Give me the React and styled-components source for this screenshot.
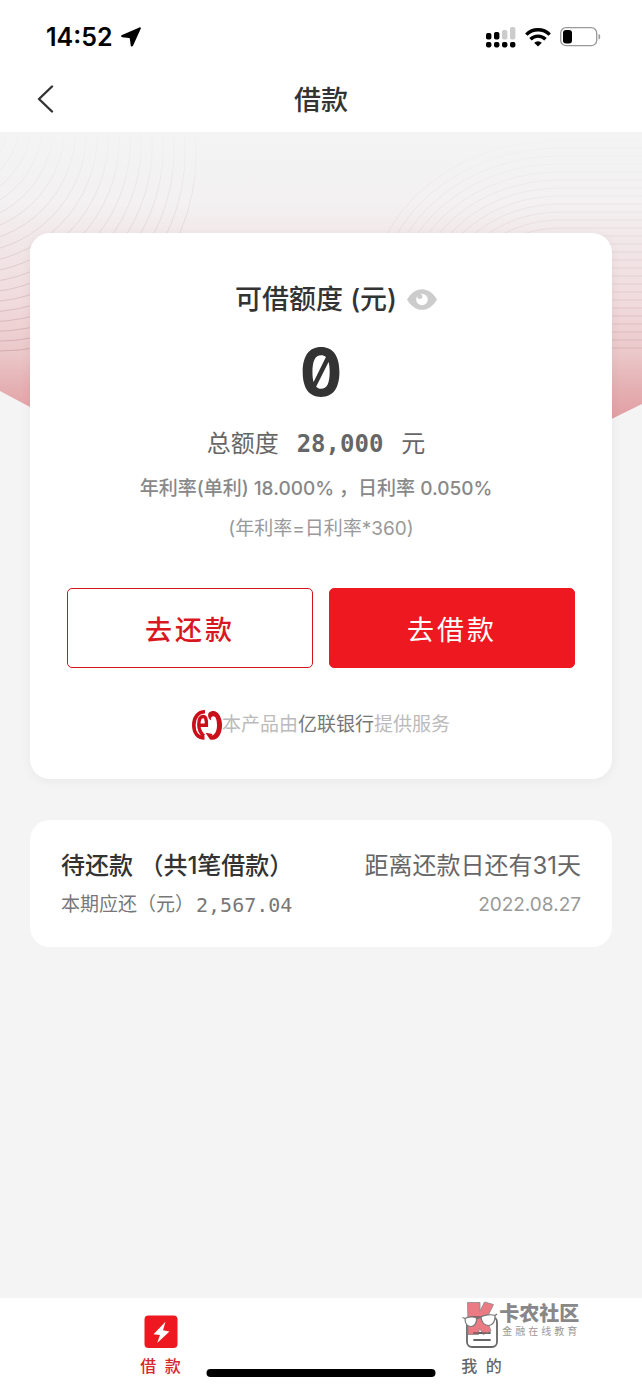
import React, { useState } from 'react';
import styled, { createGlobalStyle, css } from 'styled-components';

const GlobalStyle = createGlobalStyle`
  * {
    box-sizing: border-box;
  }

  body {
    margin: 0;
    background: #f4f4f4;
    color: #333;
    font-family: Inter, 'Noto Sans CJK SC', sans-serif;
  }

  button {
    font-family: inherit;
    cursor: pointer;
  }
`;

const Page = styled.div`
  min-height: 100vh;
  display: flex;
  flex-direction: column;
`;

const StatusBar = styled.div`
  height: 74px;
  padding: 0 41px 0 46px;
  display: flex;
  align-items: center;
  justify-content: space-between;
  background: #fff;
  color: #000;
`;

const StatusGroup = styled.div`
  display: flex;
  align-items: center;
  gap: ${(props) => props.$gap}px;
`;

const Time = styled.span`
  font-size: 25px;
  line-height: 30px;
  font-weight: 600;
`;

const Header = styled.header`
  height: 58px;
  padding: 0 32px 6px;
  display: grid;
  grid-template-columns: 30px 1fr 30px;
  align-items: center;
  background: #fff;
`;

const HeaderTitle = styled.h1`
  margin: 0;
  padding-top: 2px;
  text-align: center;
  font-size: 27px;
  line-height: 40px;
  font-weight: 500;
`;

const IconButton = styled.button`
  padding: 0 0 2px;
  border: 0;
  background: none;
  display: flex;
  align-items: center;
`;

const Main = styled.main`
  position: relative;
  flex: 1;
  padding: 101px 30px 40px;
  display: flex;
  flex-direction: column;
  gap: 41px;
`;

const Backdrop = styled.svg`
  position: absolute;
  top: 0;
  left: 0;
  width: 100%;
  height: 440px;
`;

const Card = styled.section`
  position: relative;
  border-radius: 20px;
  background: #fff;
`;

const LimitCard = styled(Card)`
  padding: 47px 37px 39px;
  display: flex;
  flex-direction: column;
  align-items: center;
  box-shadow: 0 2px 12px rgba(0, 0, 0, 0.05);
`;

const LimitTitle = styled.div`
  padding-left: 30px;
  display: flex;
  align-items: center;
  gap: 10px;
`;

const LimitLabel = styled.h2`
  margin: 0;
  font-size: 27px;
  line-height: 40px;
  font-weight: 500;
`;

const Amount = styled.div`
  margin-top: 12px;
  font-size: 66px;
  line-height: 80px;
  font-weight: 700;
  font-feature-settings: 'zero', 'tnum';
`;

const Total = styled.div`
  margin-top: 16px;
  padding-right: 10px;
  display: flex;
  align-items: center;
  gap: 18px;
  font-size: 24px;
  line-height: 32px;
  color: #666;
`;

const Mono = styled.span`
  font-family: 'DejaVu Sans Mono', monospace;
  font-weight: ${(props) => (props.$bold ? 700 : 400)};
`;

const Rate = styled.p`
  margin: 15px 0 0;
  padding-right: 10px;
  font-size: 19px;
  line-height: 28px;
  font-weight: 500;
  color: #888;
`;

const Formula = styled.p`
  margin: 12px 0 0;
  font-size: 19px;
  line-height: 28px;
  color: #999;
`;

const Actions = styled.div`
  align-self: stretch;
  margin-top: 45px;
  display: grid;
  grid-template-columns: 1fr 1fr;
  gap: 16px;
`;

const ActionButton = styled.button`
  height: 80px;
  border: 1px solid #d2141c;
  border-radius: 5px;
  background: #fff;
  color: #d9171f;
  font-size: 27px;
  font-weight: 500;
  letter-spacing: 3px;

  ${(props) =>
    props.$primary &&
    css`
      border-color: #ed1820;
      background: #ed1820;
      color: #fff;
      font-weight: 400;
    `}
`;

const Provider = styled.p`
  margin: 42px 0 0;
  display: flex;
  align-items: center;
  font-size: 19px;
  line-height: 30px;
  color: #bbb;
`;

const Bank = styled.span`
  color: #777;
`;

const BillCard = styled(Card)`
  padding: 29px 31px 28px;
  display: flex;
  flex-direction: column;
  gap: 8px;
`;

const BillRow = styled.div`
  display: flex;
  align-items: center;
  justify-content: space-between;
`;

const BillTitle = styled.h2`
  margin: 0;
  font-size: 24px;
  line-height: 34px;
  font-weight: 500;
`;

const DueIn = styled.span`
  font-size: 24px;
  line-height: 34px;
  color: #666;
`;

const BillAmount = styled.span`
  display: flex;
  align-items: center;
  gap: 2px;
  font-size: 19px;
  line-height: 28px;
  color: #777;

  ${Mono} {
    font-size: 20px;
  }
`;

const DueDate = styled.time`
  font-size: 19px;
  line-height: 28px;
  color: #999;
`;

const TabBar = styled.nav`
  position: relative;
  height: 91px;
  display: grid;
  grid-template-columns: 1fr 1fr;
  background: #fff;
`;

const Tab = styled.a`
  padding-top: 17px;
  display: flex;
  flex-direction: column;
  align-items: center;
  gap: 5px;
  color: ${(props) => (props.$active ? '#d9272e' : '#666')};
  font-size: 16px;
  line-height: 24px;
  font-weight: 500;
  text-decoration: none;
`;

const HomeIndicator = styled.div`
  position: absolute;
  left: 50%;
  bottom: 12px;
  width: 229px;
  height: 8px;
  border-radius: 4px;
  background: #000;
  transform: translateX(-50%);
`;

const Watermark = styled.div`
  position: absolute;
  top: 3px;
  left: 72%;
  display: flex;
  align-items: flex-start;
`;

const WatermarkText = styled.div`
  padding-top: 2px;
`;

const WatermarkName = styled.div`
  font-size: 20px;
  line-height: 22px;
  font-weight: 900;
  color: #888;
`;

const WatermarkSlogan = styled.div`
  padding-left: 3px;
  font-size: 10px;
  line-height: 12px;
  letter-spacing: 3px;
  color: #999;
`;

const leftWaves = Array.from({ length: 24 }, (_, i) => {
  const t = i / 17;
  return { cx: -60 * t, cy: 23 - 40 * t, r: 196 - 126 * t };
}).filter((wave) => wave.r > 0);

const rightWaves = Array.from({ length: 27 }, (_, i) => {
  const top = 8 + i * 8;
  const ry = 168 - top;
  const rx = 190 - i * 9;
  return ry > 0 && rx > 0
    ? `M642 ${top}H560A${rx} ${ry} 0 0 0 ${560 - rx} 168`
    : `M642 ${top}H560`;
});

function HeroBackdrop() {
  return (
    <Backdrop viewBox="0 0 642 440" preserveAspectRatio="none" aria-hidden="true">
      <defs>
        <linearGradient id="sky" gradientUnits="userSpaceOnUse" x1="0" y1="0" x2="0" y2="290">
          <stop offset="0" stopColor="#f4f4f4" />
          <stop offset="0.24" stopColor="#f3f1f2" />
          <stop offset="0.36" stopColor="#f2e8e9" />
          <stop offset="0.6" stopColor="#f0dadc" />
          <stop offset="0.76" stopColor="#ebc8ca" />
          <stop offset="0.87" stopColor="#e5b2b5" />
          <stop offset="1" stopColor="#e19da1" />
        </linearGradient>
        <linearGradient id="wave" gradientUnits="userSpaceOnUse" x1="0" y1="0" x2="0" y2="220">
          <stop offset="0" stopColor="#a08a8e" stopOpacity="0.02" />
          <stop offset="0.3" stopColor="#a08a8e" stopOpacity="0.13" />
          <stop offset="1" stopColor="#a8707a" stopOpacity="0.35" />
        </linearGradient>
      </defs>
      <path d="M0 0H642V272L321 430L0 259Z" fill="url(#sky)" />
      <g fill="none" stroke="url(#wave)">
        {leftWaves.map((wave) => (
          <circle key={wave.r} cx={wave.cx} cy={wave.cy} r={wave.r} />
        ))}
      </g>
      <g fill="none" stroke="url(#wave)" strokeOpacity="0.7">
        {rightWaves.map((d) => (
          <path key={d} d={d} />
        ))}
      </g>
    </Backdrop>
  );
}

function LocationIcon() {
  return (
    <svg width="20" height="20" viewBox="0 0 20 20" aria-hidden="true">
      <path
        d="M18.4 .5C19.5 0 20.2 .8 19.7 1.8L12 18.7C11.4 19.9 9.9 19.7 9.7 18.4L8.9 12C8.8 11.4 8.5 11.2 8 11.1L1.3 10.3C-.1 10.1 -.3 8.5 1 7.9Z"
        fill="#000"
      />
    </svg>
  );
}

function SignalIcon() {
  return (
    <svg width="30" height="21" viewBox="0 0 30 21" aria-hidden="true">
      <g fill="#000">
        <rect x="0" y="6" width="5.4" height="6.6" rx="1.8" />
        <rect x="8" y="5" width="5.4" height="7.6" rx="1.8" />
        <rect x="0" y="15" width="5.4" height="5.4" rx="1.8" />
        <rect x="8" y="15" width="5.4" height="5.4" rx="1.8" />
        <rect x="16" y="15" width="5.4" height="5.4" rx="1.8" />
        <rect x="24" y="15" width="5.4" height="5.4" rx="1.8" />
      </g>
      <rect x="16" y="3" width="5.4" height="9.6" rx="1.8" fill="#ccc" />
      <rect x="24" y="0" width="5.4" height="12.6" rx="1.8" fill="#ccc" />
    </svg>
  );
}

function WifiIcon() {
  return (
    <svg width="26" height="19" viewBox="0 0 26 19" aria-hidden="true">
      <g fill="none" stroke="#000" strokeWidth="3.4">
        <path d="M1.3 6.6A16.5 16.5 0 0 1 24.7 6.6" />
        <path d="M5.5 11.2A10.6 10.6 0 0 1 20.5 11.2" />
      </g>
      <path d="M13 18.6L9.2 14.7A5.5 5.5 0 0 1 16.8 14.7Z" fill="#000" />
    </svg>
  );
}

function BatteryIcon() {
  return (
    <svg width="41" height="20" viewBox="0 0 41 20" aria-hidden="true">
      <rect x=".7" y=".7" width="36" height="18" rx="5.5" fill="none" stroke="#999" strokeWidth="1.3" />
      <rect x="3" y="3" width="9" height="13.5" rx="3" fill="#000" />
      <path d="M38.5 7C40.8 7.5 40.8 12 38.5 12.5Z" fill="#999" />
    </svg>
  );
}

function BackIcon() {
  return (
    <svg width="24" height="28" viewBox="0 0 24 28" aria-hidden="true">
      <path
        d="M20 1.5L7 14L20 26.5"
        fill="none"
        stroke="#333"
        strokeWidth="2.4"
        strokeLinecap="round"
        strokeLinejoin="round"
      />
    </svg>
  );
}

function EyeIcon() {
  return (
    <svg width="30" height="21" viewBox="0 0 30 21" aria-hidden="true">
      <path d="M0 10.5C8 -3.3 22 -3.3 30 10.5C22 24.3 8 24.3 0 10.5Z" fill="#ccc" />
      <circle cx="15" cy="10.5" r="5.8" fill="#fff" />
      <circle cx="12.8" cy="7.6" r="2.5" fill="#ccc" />
    </svg>
  );
}

function BankLogo() {
  return (
    <svg width="30" height="30" viewBox="0 0 30 30" aria-hidden="true">
      <g fill="none" stroke="#c80f1a">
        <path d="M13 1.8C6 1.8 1.8 7.5 1.8 15C1.8 22.5 5.5 28 12.5 28" strokeWidth="3.6" />
        <path
          d="M7.500 15.300H14.400C14.700 9.500 13.600 6.500 11 6.500C8.300 6.500 6.800 10 6.800 14.800C6.800 20 9 23.500 12 26"
          strokeWidth="3.4"
        />
      </g>
      <path
        d="M16.5 3C24 -3 30 6 30 15C30 25 25 31.5 18 29.5L13.5 22.8L20.5 24L19.5 25.6C23 25 25 21 25 15C25 8 22.5 4.5 19.5 7C18.5 8 18.8 9 19.2 10.4C16.5 8.8 15.5 6 16.5 3Z"
        fill="#c80f1a"
      />
    </svg>
  );
}

function LoanIcon() {
  return (
    <svg width="34" height="34" viewBox="0 0 34 34" aria-hidden="true">
      <rect x=".5" y=".5" width="33" height="32.5" rx="4" fill="#ed1820" />
      <path d="M21.5 6.8L9.5 19.2L16 20L13.2 28L25.5 16.4L19 15.2Z" fill="#fff" />
    </svg>
  );
}

function MineIcon() {
  return (
    <svg width="34" height="34" viewBox="0 0 34 34" aria-hidden="true">
      <g fill="none" stroke="#666" strokeWidth="1.8" strokeLinecap="round">
        <rect x="2" y="2" width="30" height="30" rx="5" />
        <path d="M9 18H25M9 25H25" />
      </g>
    </svg>
  );
}

function WatermarkLogo() {
  return (
    <svg width="37" height="36" viewBox="0 0 37 36" aria-hidden="true">
      <path
        d="M5.5 1.5H18V10L22.5 1L31.5 3.5L24.5 18L29 30L21 33.5L17.5 27L16.500 33.500H6V22Z"
        fill="#ea6b76"
        fillOpacity="0.9"
        stroke="#888"
        strokeWidth=".8"
      />
      <path d="M8 16H28M11 32H24" fill="none" stroke="#555" strokeWidth="1.2" />
      <g fill="#fff" stroke="#777" strokeWidth="1.2">
        <path d="M3 17.5C6 15.5 12 15.500 14.500 17C15 22 12.500 25.500 9 25.500C5 25.500 3 22 3 17.500Z" />
        <path d="M19 16C22 14 29 13 33 14.500C33.500 20 31 24 27 24.500C22.500 24.500 19.500 21 19 16Z" />
      </g>
      <path d="M.5 16.500L3 17.500M14.500 17.500L19 16.500M33 14.500L35 13" stroke="#777" strokeWidth="1.300" />
    </svg>
  );
}

export default function App() {
  const [visible, setVisible] = useState(true);

  return (
    <Page>
      <GlobalStyle />
      <StatusBar>
        <StatusGroup $gap={8}>
          <Time>14:52</Time>
          <LocationIcon />
        </StatusGroup>
        <StatusGroup $gap={9}>
          <SignalIcon />
          <WifiIcon />
          <BatteryIcon />
        </StatusGroup>
      </StatusBar>
      <Header>
        <IconButton type="button" aria-label="返回">
          <BackIcon />
        </IconButton>
        <HeaderTitle>借款</HeaderTitle>
      </Header>

      <Main>
        <HeroBackdrop />
        <LimitCard>
          <LimitTitle>
            <LimitLabel>可借额度 (元)</LimitLabel>
            <IconButton type="button" aria-label="显示额度" onClick={() => setVisible(!visible)}>
              <EyeIcon />
            </IconButton>
          </LimitTitle>
          <Amount>{visible ? '0' : '****'}</Amount>
          <Total>
            <span>总额度</span>
            <Mono $bold>{visible ? '28,000' : '****'}</Mono>
            <span>元</span>
          </Total>
          <Rate>年利率(单利) 18.000% ，日利率 0.050%</Rate>
          <Formula>(年利率=日利率*360)</Formula>
          <Actions>
            <ActionButton type="button">去还款</ActionButton>
            <ActionButton type="button" $primary>
              去借款
            </ActionButton>
          </Actions>
          <Provider>
            <BankLogo />
            本产品由<Bank>亿联银行</Bank>提供服务
          </Provider>
        </LimitCard>

        <BillCard>
          <BillRow>
            <BillTitle>待还款 （共1笔借款）</BillTitle>
            <DueIn>距离还款日还有31天</DueIn>
          </BillRow>
          <BillRow>
            <BillAmount>
              本期应还（元）<Mono>2,567.04</Mono>
            </BillAmount>
            <DueDate dateTime="2022-08-27">2022.08.27</DueDate>
          </BillRow>
        </BillCard>
      </Main>

      <TabBar>
        <Tab href="#loan" $active>
          <LoanIcon />
          借&nbsp;&nbsp;款
        </Tab>
        <Tab href="#mine">
          <MineIcon />
          我&nbsp;&nbsp;的
        </Tab>
        <Watermark>
          <WatermarkLogo />
          <WatermarkText>
            <WatermarkName>卡农社区</WatermarkName>
            <WatermarkSlogan>金融在线教育</WatermarkSlogan>
          </WatermarkText>
        </Watermark>
        <HomeIndicator />
      </TabBar>
    </Page>
  );
}
